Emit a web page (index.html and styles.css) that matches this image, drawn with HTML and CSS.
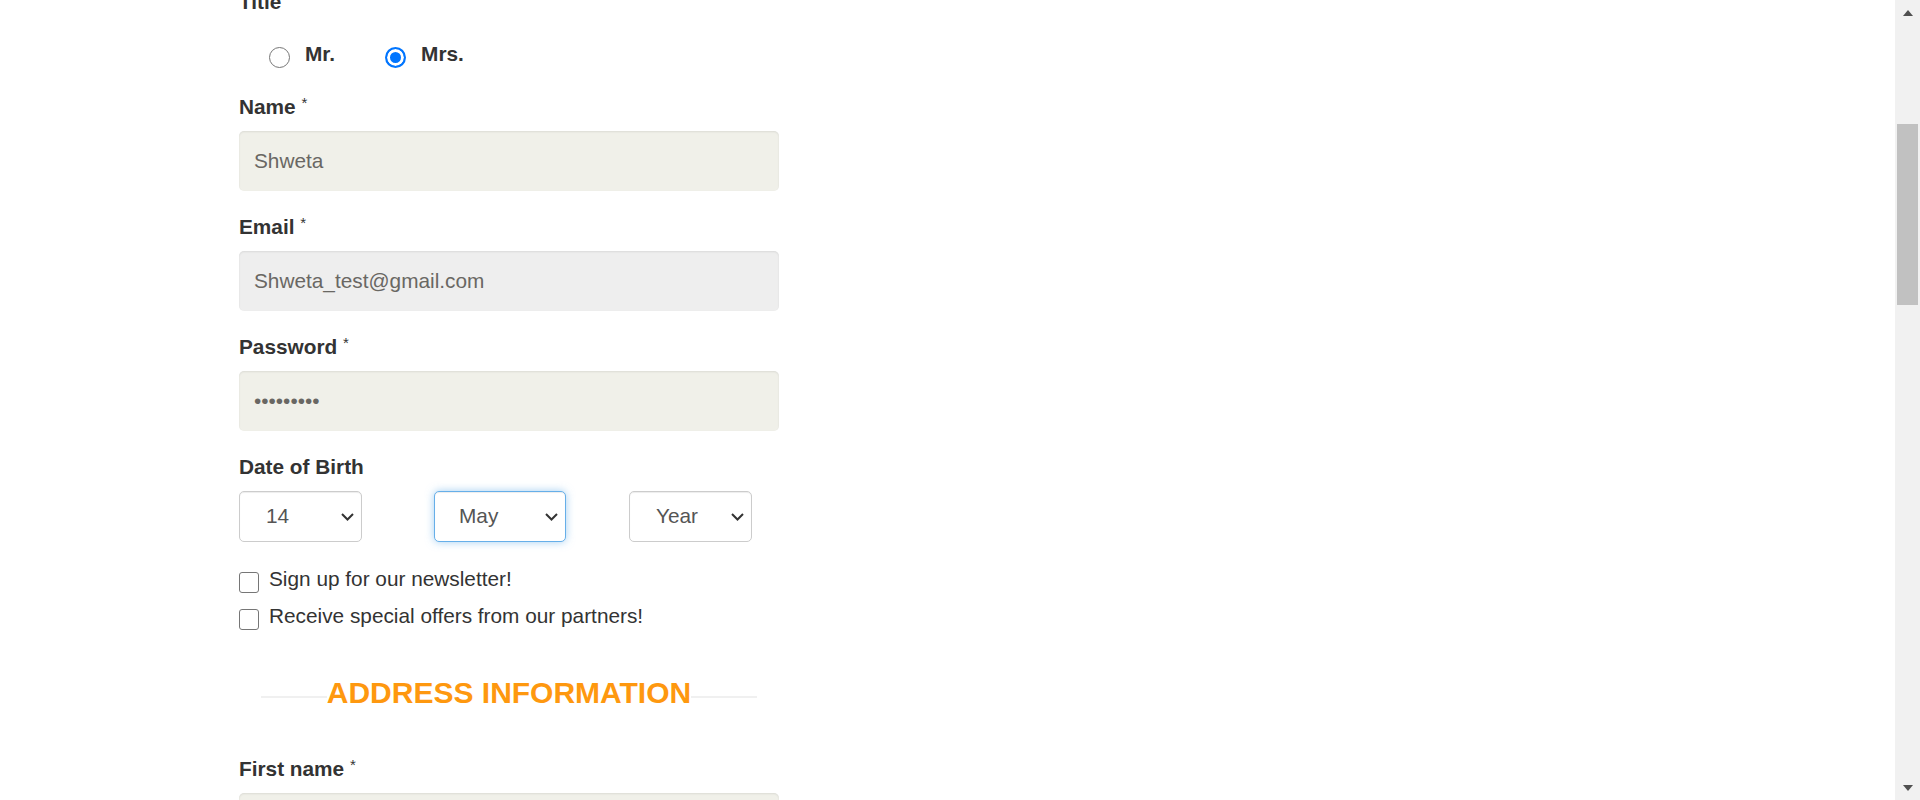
FILE: index.html
```html
<!DOCTYPE html>
<html lang="en">
<head>
<meta charset="utf-8">
<title>Signup - Account information</title>
<link rel="stylesheet" href="styles.css">
</head>
<body>
<div class="page">
  <main class="main">
    <form class="form">
      <div class="label">Title</div>
      <div class="radios">
        <label class="radio"><input type="radio" name="title" value="Mr"><span>Mr.</span></label>
        <label class="radio"><input type="radio" name="title" value="Mrs" checked><span>Mrs.</span></label>
      </div>

      <div class="field first">
        <label class="label">Name <span class="req">*</span></label>
        <input class="input" type="text" value="Shweta">
      </div>

      <div class="field">
        <label class="label">Email <span class="req">*</span></label>
        <input class="input disabled" type="text" value="Shweta_test@gmail.com" readonly>
      </div>

      <div class="field">
        <label class="label">Password <span class="req">*</span></label>
        <input class="input" type="password" value="123456789">
      </div>

      <div class="field">
        <label class="label">Date of Birth</label>
        <div class="dob">
          <div class="select day"><span>14</span><svg class="chev" width="13" height="8" viewBox="0 0 13 8"><polyline points="1,1 6.5,6.5 12,1" fill="none" stroke="#333" stroke-width="2"/></svg></div>
          <div class="select month focus"><span>May</span><svg class="chev" width="13" height="8" viewBox="0 0 13 8"><polyline points="1,1 6.5,6.5 12,1" fill="none" stroke="#333" stroke-width="2"/></svg></div>
          <div class="select year"><span>Year</span><svg class="chev" width="13" height="8" viewBox="0 0 13 8"><polyline points="1,1 6.5,6.5 12,1" fill="none" stroke="#333" stroke-width="2"/></svg></div>
        </div>
      </div>

      <div class="checks">
        <label class="check"><input type="checkbox"><span>Sign up for our newsletter!</span></label>
        <label class="check"><input type="checkbox"><span>Receive special offers from our partners!</span></label>
      </div>

      <h2 class="section-title"><span>ADDRESS INFORMATION</span></h2>

      <div class="field last">
        <label class="label">First name <span class="req">*</span></label>
        <input class="input" type="text" value="">
      </div>
    </form>
  </main>
  <div class="scrollbar">
    <div class="sb-btn"><span class="tri-up"></span></div>
    <div class="sb-track"><div class="sb-thumb"></div></div>
    <div class="sb-btn"><span class="tri-down"></span></div>
  </div>
</div>
</body>
</html>
```

FILE: styles.css
```css
html, body {
  margin: 0;
  padding: 0;
  height: 800px;
  overflow: hidden;
  background: #fff;
}

body {
  font-family: "Liberation Sans", Arial, sans-serif;
  color: #333;
}

.page {
  display: flex;
  height: 800px;
}

.main {
  flex: 1;
  overflow: hidden;
}

.form {
  width: 540px;
  margin: -10px 0 0 239px;
}

.label {
  display: block;
  font-size: 20.8px;
  line-height: 24px;
  font-weight: bold;
  color: #333;
}

.req {
  font-size: 15px;
  line-height: 15px;
  font-weight: normal;
  vertical-align: top;
  color: #333;
}

/* radios */
.radios {
  display: flex;
  gap: 50px;
  margin-top: 27px;
  padding-left: 30px;
}

.radio {
  display: flex;
  align-items: flex-start;
  height: 26px;
  font-size: 20.8px;
  line-height: 26px;
  font-weight: bold;
  color: #333;
}

.radio input {
  appearance: none;
  -webkit-appearance: none;
  flex: none;
  width: 21px;
  height: 21px;
  margin: 6px 15px 0 0;
  border: 1.5px solid #767676;
  border-radius: 50%;
  background: #fff;
  box-sizing: border-box;
}

.radio input:checked {
  border: 2px solid #0075ff;
  background: #0075ff;
  box-shadow: inset 0 0 0 3px #fff;
}

/* text inputs */
.field {
  margin-top: 24px;
}

.field.first {
  margin-top: 28px;
}

.input {
  display: block;
  width: 540px;
  height: 60px;
  margin-top: 12px;
  padding: 0 15px;
  box-sizing: border-box;
  border: none;
  border-radius: 5px;
  background: #f0f0e9;
  box-shadow: inset 0 1px 2px rgba(0, 0, 0, 0.09);
  font-family: "Liberation Sans", Arial, sans-serif;
  font-size: 20.8px;
  color: #696763;
  outline: none;
}

.input.disabled {
  background: #eeeeee;
}

/* date of birth */
.dob {
  display: grid;
  grid-template-columns: 195px 195px auto;
  margin-top: 12px;
}

.select {
  display: flex;
  align-items: center;
  height: 51px;
  box-sizing: border-box;
  padding: 0 7px 0 26px;
  border: 1px solid #cccccc;
  border-radius: 5px;
  background: #fff;
  box-shadow: inset 0 1px 1px rgba(0, 0, 0, 0.075);
  font-size: 20.8px;
  color: #555;
}

.select span {
  margin-top: -1.5px;
}

.select.day,
.select.year {
  width: 123px;
}

.select.month {
  width: 132px;
  padding-left: 24px;
}

.select.focus {
  border-color: #66afe9;
  box-shadow: inset 0 1px 1px rgba(0, 0, 0, 0.075), 0 0 8px rgba(102, 175, 233, 0.6);
}

.chev {
  margin-left: auto;
  display: block;
}

/* checkboxes */
.checks {
  display: flex;
  flex-direction: column;
  gap: 11px;
  margin-top: 24px;
}

.check {
  display: flex;
  align-items: flex-start;
  height: 26px;
  font-size: 20.8px;
  line-height: 26px;
  color: #333;
}

.check input {
  appearance: none;
  -webkit-appearance: none;
  flex: none;
  width: 20px;
  height: 21px;
  margin: 5.5px 10px 0 0;
  box-sizing: border-box;
  border: 1.5px solid #767676;
  border-radius: 3px;
  background: #fff;
}

/* section heading */
.section-title {
  margin: 46px 22px 0;
  height: 36px;
  font-size: 30px;
  line-height: 36px;
  font-weight: bold;
  color: #fe980f;
  text-align: center;
  background: linear-gradient(#f0f0f0, #f0f0f0) no-repeat 0 20.5px / 100% 2px;
}

.section-title span {
  background: #fff;
}

.field.last {
  margin-top: 46px;
}

/* scrollbar */
.scrollbar {
  width: 25px;
  flex: none;
  display: flex;
  flex-direction: column;
  background: #f1f1f1;
}

.sb-btn {
  height: 25px;
  display: flex;
  align-items: center;
  justify-content: center;
}

.tri-up {
  width: 0;
  height: 0;
  border-left: 5.5px solid transparent;
  border-right: 5.5px solid transparent;
  border-bottom: 6px solid #505050;
}

.tri-down {
  width: 0;
  height: 0;
  border-left: 5.5px solid transparent;
  border-right: 5.5px solid transparent;
  border-top: 6px solid #505050;
}

.sb-track {
  flex: 1;
  padding: 0 2px;
}

.sb-thumb {
  margin-top: 99px;
  height: 181px;
  background: #c1c1c1;
}
```
